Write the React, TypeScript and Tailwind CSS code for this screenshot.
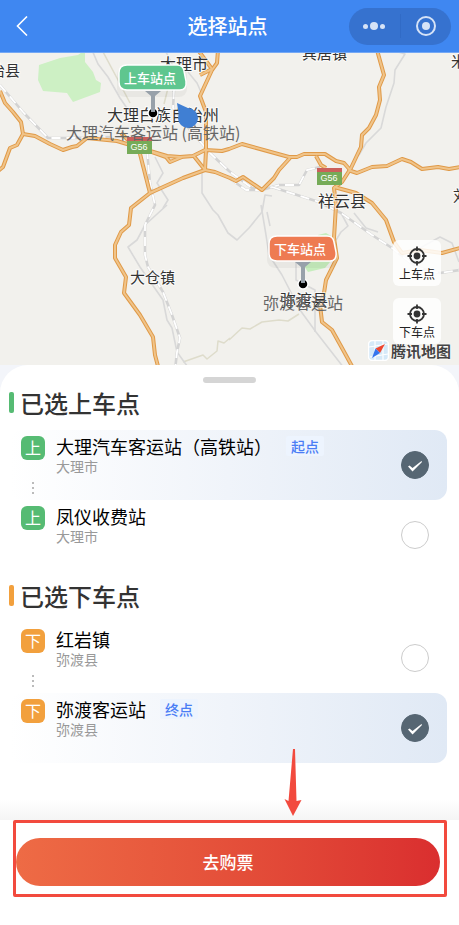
import { useState } from "react";
import { clsx } from "clsx";

type Station = { id: string; name: string; area: string; tag?: string };
type Kind = "up" | "down";

const UP_STATIONS: Station[] = [
  { id: "dali", name: "大理汽车客运站（高铁站）", area: "大理市", tag: "起点" },
  { id: "fengyi", name: "凤仪收费站", area: "大理市" },
];

const DOWN_STATIONS: Station[] = [
  { id: "hongyan", name: "红岩镇", area: "弥渡县" },
  { id: "midu", name: "弥渡客运站", area: "弥渡县", tag: "终点" },
];

const HIGHWAYS = [
  "M0 91L5 103L13 112L21 122L23 134L17 145L10 148L3 167L-2 171",
  "M23 134L35 136L50 144L63 150L72 147L77 146L87 138L117 141L127 144L150 151L167 156L180 157L193 156L205 150L222 151L229 149L242 144L289 157L297 157L304 154L325 154L336 161L344 163L351 171L357 173L372 167L387 166L402 159L411 162L422 169L438 167L449 169L460 167",
  "M218 50L217 63L212 70L200 96L206 112L206 150L205 170",
  "M198 50L212 69L200 75",
  "M193 155L205 170L215 172L230 178L236 181L243 177L262 190L274 178L279 170L290 158",
  "M205 170L183 178L150 193L131 208L129 225L121 232L115 245L115 258L126 277L124 293L140 315L153 337L155 355L159 370",
  "M139 150L150 193",
  "M152 152L166 157L170 162L182 157",
  "M121 133L128 140L143 148",
  "M377 50L384 75L379 87L380 100L376 115L369 128L362 135L361 147L351 168L342 182L334 188L336 205L334 238L337 258L326 280L324 293L320 305L322 322L332 330L342 348L353 368",
  "M334 187L356 193L372 203L386 220L394 242L402 253L420 250L442 253L460 248",
  "M316 156L321 165L326 168",
];

const RAILWAYS = [
  "M0 85L23 112L48 138L72 138L110 137",
  "M147 150L150 183L155 205L145 225L145 255L148 267L163 292L172 315L180 338L177 352L175 370",
  "M174 90L173 108L190 130L210 153L229 171L252 188L262 190L279 185L299 185L307 170L320 167",
  "M229 178L246 190L262 190",
  "M272 187L319 202L341 213L372 235L392 248L416 267L440 273L460 270",
];

const SIDE_ROADS = [
  "M92 50L98 64L108 77L120 98L133 117",
  "M165 50L173 66L173 92",
  "M188 72L197 83L201 92",
  "M392 50L405 54L395 70L394 83L386 107L381 128L366 143L359 155",
  "M167 205L145 225L137 240L128 247L140 267L163 300L167 320L172 328L177 352L190 370",
  "M155 157L163 173L157 183L168 200L163 208",
  "M202 173L202 193L213 210L218 215L228 233L237 240L249 228L262 212L265 195L272 196",
  "M261 205L266 235L269 255L282 275L300 310L316 332L344 368",
  "M267 212L270 226",
  "M296 262L296 280L315 290L315 332",
  "M341 213L348 226L341 232L336 240",
  "M354 213L366 228L378 232",
  "M420 248L440 237L452 243L459 262",
];

const TRACKS = [
  "M102 50L118 80L130 103",
  "M168 88L164 104",
  "M229 340L242 328L250 329L262 322L279 320L288 321L299 314",
  "M183 362L203 355L207 359L217 351L218 341L224 343L230 338",
];

const PLACES = [
  { text: "治县", x: -10, y: 76, size: 15 },
  { text: "大理市", x: 160, y: 70, size: 16 },
  { text: "宾居镇", x: 302, y: 59, size: 15 },
  { text: "米", x: 451, y: 67, size: 15 },
  { text: "刘", x: 453, y: 201, size: 15 },
  { text: "大理白族自治州", x: 107, y: 121, size: 16 },
  { text: "祥云县", x: 318, y: 207, size: 16 },
  { text: "大仓镇", x: 130, y: 283, size: 15 },
  { text: "弥渡县", x: 280, y: 306, size: 16 },
];

function RoadSign({ x, y }: { x: number; y: number }) {
  return (
    <g>
      <rect x={x} y={y} width="25" height="17" fill="#76ab58" />
      <rect x={x} y={y} width="25" height="4" fill="#cb605b" />
      <text
        x={x + 12}
        y={y + 13}
        fontSize="9"
        textAnchor="middle"
        fill="#fff"
        className="font-['Liberation_Sans',sans-serif] font-medium"
      >
        G56
      </text>
    </g>
  );
}

function Pin({ x, y, color, text }: { x: number; y: number; color: string; text: string }) {
  return (
    <g>
      <rect x={x - 36} y={y - 46} width="70" height="30" rx="8" fill="#000" opacity="0.04" />
      <circle cx={x} cy={y} r="5" fill="#000" stroke="#fff" strokeWidth="1.5" />
      <path d={`M${x - 8} ${y - 22}h16l-6 5v16h-4v-16z`} fill="#98a1aa" />
      <path
        d={`M${x - 26} ${y - 48}h50q6 0 7 6l2 10q1 9 -6 9h-53q-8 0 -8 -8v-9q0 -8 8 -8z`}
        fill={color}
        stroke="#fff"
        strokeWidth="1.5"
      />
      <text x={x - 3} y={y - 30} fontSize="13" fontWeight="500" textAnchor="middle" fill="#fff">
        {text}
      </text>
    </g>
  );
}

function MapCanvas() {
  return (
    <svg
      viewBox="0 53 459 312"
      preserveAspectRatio="xMidYMin slice"
      className="block h-[312px] w-full bg-[#f2f1ed]"
      aria-label="站点地图"
    >
      <path
        d="M39 65L60 58L78 55L85 50L85 62L93 72L96 80L101 83L100 92L73 102L67 93L43 91L38 80Z"
        fill="#cdf0c4"
      />
      <path d="M318 235L326 233L331 236L330 262L325 268L308 272L304 266L312 258Z" fill="#c6edbd" />
      <g fill="none" strokeLinejoin="round">
        {TRACKS.map((d) => (
          <path key={d} d={d} stroke="#dedccb" strokeWidth="1.5" />
        ))}
        {SIDE_ROADS.map((d) => (
          <path key={d} d={d} stroke="#d9d9d9" strokeWidth="1.6" />
        ))}
        {RAILWAYS.map((d) => (
          <g key={d}>
            <path d={d} stroke="#d3d3d3" strokeWidth="2.6" />
            <path d={d} stroke="#fff" strokeWidth="1.8" strokeDasharray="9 6" />
          </g>
        ))}
        {HIGHWAYS.map((d) => (
          <path key={d} d={d} stroke="#e09a48" strokeWidth="4" />
        ))}
        {HIGHWAYS.map((d) => (
          <path key={d} d={d} stroke="#f0c48a" strokeWidth="2" />
        ))}
      </g>

      <g fill="#333" stroke="#fff" strokeWidth="2" strokeOpacity="0.7" paintOrder="stroke">
        {PLACES.map((p) => (
          <text key={p.text} x={p.x} y={p.y} fontSize={p.size}>
            {p.text}
          </text>
        ))}
      </g>
      <RoadSign x={127} y={137} />
      <RoadSign x={317} y={168} />
      <g fill="#666" fontSize="16">
        <text x="66" y="139">
          大理汽车客运站 (高铁站)
        </text>
        <text x="263" y="309">弥渡客运站</text>
      </g>

      {/* current heading */}
      <path d="M177 103L190 109L179 117Z" fill="#407fd3" />
      <circle cx="188" cy="118" r="10" fill="#407fd3" />
      <Pin x={153} y={113} color="#5fc68f" text="上车站点" />
      <Pin x={303} y={284} color="#ee7b52" text="下车站点" />
    </svg>
  );
}

function LocateButton({ text }: { text: string }) {
  return (
    <button
      type="button"
      className="flex h-[46px] w-12 flex-col items-center rounded-md bg-white/85 pt-[6px] text-xs leading-4 text-[#222]"
    >
      <svg viewBox="0 0 20 20" className="h-5 w-5 shrink-0" fill="none" stroke="#333" strokeWidth="1.8">
        <circle cx="10" cy="10" r="7" />
        <circle cx="10" cy="10" r="3.4" fill="#333" stroke="none" />
        <path d="M10 0.500v4.500M10 15v4.500M0.500 10h4.500M15 10h4.500" />
      </svg>
      {text}
    </button>
  );
}

function StationRow({
  station,
  kind,
  linked,
  checked,
  onSelect,
}: {
  station: Station;
  kind: Kind;
  linked: boolean;
  checked: boolean;
  onSelect: () => void;
}) {
  return (
    <label
      className={clsx(
        "flex h-[70px] cursor-pointer items-start rounded-xl pr-[18px] pl-[11px]",
        checked && "bg-linear-to-r from-white via-[#f0f4fa] to-[#e0e9f5]",
      )}
    >
      <span className="flex flex-col items-center pt-1.5">
        <span
          className={clsx(
            "flex h-6 w-6 items-center justify-center rounded-md pb-0.5 text-base leading-6 text-white",
            kind === "up" ? "bg-[#56bb73]" : "bg-[#f2a03d]",
          )}
        >
          {kind === "up" ? "上" : "下"}
        </span>
        {linked && (
          <span className="mt-[22px] flex flex-col gap-[3px]">
            <i className="h-0.5 w-0.5 bg-[#bbb]" />
            <i className="h-0.5 w-0.5 bg-[#bbb]" />
            <i className="h-0.5 w-0.5 bg-[#bbb]" />
          </span>
        )}
      </span>
      <span className="flex flex-1 flex-col pt-1 pl-[11px]">
        <span className="flex items-center gap-[14px] text-lg leading-6 whitespace-nowrap text-black">
          {station.name}
          {station.tag && (
            <span className="rounded-xs bg-[#edf4fe] px-[5px] text-sm leading-5 font-medium text-[#4a7df5]">
              {station.tag}
            </span>
          )}
        </span>
        <span className="text-sm leading-4 text-[#999]">{station.area}</span>
      </span>
      <span className="grid h-7 w-7 place-items-center self-center">
        <input
          type="radio"
          name={kind}
          checked={checked}
          onChange={onSelect}
          className="col-start-1 row-start-1 h-7 w-7 appearance-none rounded-full border border-[#ccc] bg-white checked:border-[#566673] checked:bg-[#566673]"
        />
        {checked && (
          <svg viewBox="0 0 28 28" className="pointer-events-none col-start-1 row-start-1 h-7 w-7">
            <path d="M7 15.500L8.500 14.500L11.500 17L20.500 10L21 11L11.500 20.500Z" fill="#fff" />
          </svg>
        )}
      </span>
    </label>
  );
}

function StationGroup({ kind, title, stations, initial }: { kind: Kind; title: string; stations: Station[]; initial: string }) {
  const [selected, setSelected] = useState(initial);

  return (
    <section className="pr-3 pl-[9px]">
      <h2 className="flex h-[53px] items-center gap-[6px] pb-0.5 text-2xl font-medium text-[#333]">
        <span className={clsx("h-[21px] w-[5px] rounded-xs", kind === "up" ? "bg-[#56bb73]" : "bg-[#f2a03d]")} />
        {title}
      </h2>
      <div className="pl-px">
        {stations.map((s, i) => (
          <StationRow
            key={s.id}
            station={s}
            kind={kind}
            linked={i < stations.length - 1}
            checked={selected === s.id}
            onSelect={() => setSelected(s.id)}
          />
        ))}
      </div>
    </section>
  );
}

export default function App() {
  return (
    <div className="flex min-h-screen flex-col bg-white font-['Noto_Sans_CJK_SC',sans-serif]">
      {/* Nav bar */}
      <header className="grid h-[53px] grid-cols-[1fr_auto_1fr] items-center border-b border-[#74a8f5] bg-[#3f87f1] pr-2 pl-1 text-white">
        <button type="button" aria-label="返回" className="flex h-9 w-9 items-center justify-center">
          <svg viewBox="0 0 12 20" className="h-5 w-3" fill="none" stroke="currentColor" strokeWidth="1.6">
            <path d="M11 0.500L1.500 10L11 19.500" />
          </svg>
        </button>
        <h1 className="text-xl font-medium">选择站点</h1>
        <div className="flex h-[37px] w-[102px] items-center justify-self-end rounded-full bg-[#3672cf]">
          <button type="button" aria-label="更多" className="flex flex-1 items-center justify-center gap-0.5">
            <span className="h-[5px] w-[5px] rounded-full bg-[#d6e3f7]" />
            <span className="h-2 w-2 rounded-full bg-[#d6e3f7]" />
            <span className="h-[5px] w-[5px] rounded-full bg-[#d6e3f7]" />
          </button>
          <span className="h-6 w-px bg-[#316bc6]" />
          <button type="button" aria-label="关闭" className="flex flex-1 items-center justify-center">
            <span className="flex h-5 w-5 items-center justify-center rounded-full border-2 border-[#d6e3f7]">
              <span className="h-2 w-2 rounded-full bg-[#d6e3f7]" />
            </span>
          </button>
        </div>
      </header>

      {/* Map */}
      <div className="relative">
        <MapCanvas />
        <div className="absolute right-[18px] bottom-[21px] flex flex-col gap-3">
          <LocateButton text="上车点" />
          <LocateButton text="下车点" />
        </div>
        <div className="absolute right-2 bottom-1 flex items-center gap-0.5 text-[15px] leading-5 font-bold text-[#444]">
          <svg viewBox="0 0 21 21" className="h-[21px] w-[21px]">
            <rect x="0.500" y="0.500" width="20" height="20" rx="4" fill="#d5e9f8" stroke="#fff" strokeWidth="1.5" />
            <path d="M1 7L20 4M7 1V20M2 17L20 14M15 1V20" stroke="#fff" strokeWidth="1.2" />
            <path d="M17 4L7.500 8.500L12 13Z" fill="#ee4630" />
            <path d="M4 18L7.500 8.500L12 13Z" fill="#3475ee" />
          </svg>
          <span className="[text-shadow:0_0_2px_#fff,0_0_2px_#fff]">腾讯地图</span>
        </div>
      </div>

      {/* Station sheet */}
      <main className="flex flex-1 flex-col bg-[#f3f5fa]">
        <div className="flex flex-1 flex-col rounded-t-[28px] bg-white pt-3">
          <div className="mx-auto h-[6px] w-[53px] rounded-full bg-[#d5d5d5]" />
          <div className="-mt-[6px] flex flex-col">
            <StationGroup kind="up" title="已选上车点" stations={UP_STATIONS} initial="dali" />
            <StationGroup kind="down" title="已选下车点" stations={DOWN_STATIONS} initial="midu" />
          </div>
          <div className="mt-auto h-5 bg-linear-to-b from-white to-[#f5f5f5]" />
        </div>
      </main>

      {/* Footer */}
      <footer className="relative bg-white pr-3 pb-7 pl-[13px]">
        <svg viewBox="0 0 18 67" className="absolute -top-[71px] left-[284px] h-[67px] w-[18px]" fill="#f24a3e">
          <path d="M9 0H11L12.500 52L17.500 51L9 67L0.500 50L4.500 52Z" />
        </svg>
        <div className="rounded-xs border-3 border-[#f24a3e] pt-[15px] pr-1 pb-2">
          <button
            type="button"
            className="h-12 w-full rounded-full bg-linear-to-r from-[#ee6b45] to-[#da2e2f] text-[17px] font-medium text-white"
          >
            去购票
          </button>
        </div>
      </footer>
    </div>
  );
}
